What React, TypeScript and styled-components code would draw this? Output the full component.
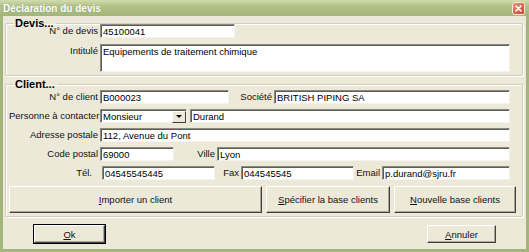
import styled, { createGlobalStyle } from 'styled-components'

const GlobalStyle = createGlobalStyle`
  html, body {
    margin: 0;
    padding: 0;
    background: #ffffff;
  }
  body {
    font-family: 'Liberation Sans', Arial, sans-serif;
    font-size: 9.5px;
    color: #000;
  }
  * {
    box-sizing: border-box;
  }
`

const Window = styled.div`
  width: 529px;
  height: 252px;
  display: flex;
  flex-direction: column;
  background: #ece9d8;
`

const TitleBar = styled.div`
  height: 16px;
  flex: none;
  display: flex;
  align-items: center;
  justify-content: space-between;
  padding: 0 4px 0 3px;
  background: linear-gradient(#d2ddae, #b3c38b 35%, #a2b479);
  color: #fff;
  font-weight: bold;
  font-size: 10px;
  text-shadow: 0 0 1px #7d8f55;
`

const Frame = styled.div`
  flex: 1;
  display: flex;
  flex-direction: column;
  border: 3px solid #a3b57c;
  border-top: none;
  padding-top: 1px;
`

const Group = styled.fieldset<{ $top?: number }>`
  margin: ${p => p.$top ?? 0}px 3px 0 2px;
  padding: 0 12px 3px 3px;
  border: 1px solid #cfcdbd;
  box-shadow: inset 1px 1px 0 #fff, 1px 1px 0 #fff;
  border-radius: 2px;
  min-width: 0;
`

const Legend = styled.legend`
  font-weight: bold;
  font-size: 11px;
  line-height: 12px;
  padding: 0 2px;
  margin-left: 4px;
  color: #000;
`

const Rows = styled.div<{ $shift?: number; $gap: number }>`
  display: flex;
  flex-direction: column;
  gap: ${p => p.$gap}px;
  margin-top: ${p => p.$shift ?? 0}px;
`

const Row = styled.div<{ $top?: boolean }>`
  display: flex;
  align-items: ${p => (p.$top ? 'flex-start' : 'center')};
`

const Label = styled.span<{ $w: number; $pr?: number }>`
  width: ${p => p.$w}px;
  flex: none;
  text-align: right;
  padding-right: ${p => p.$pr ?? 2}px;
  white-space: nowrap;
  line-height: 14px;
  color: #111;
`

const Field = styled.input<{ $w?: number }>`
  height: 14px;
  ${p => (p.$w ? `width: ${p.$w}px; flex: none;` : 'flex: 1; min-width: 0;')}
  padding: 0 2px;
  border: 1px solid;
  border-color: #8a8a80 #f4f3ee #f4f3ee #8a8a80;
  box-shadow: inset 1px 1px 0 #5e5e58;
  background: #fff;
  font: inherit;
  color: #000;
  outline: none;
`

const Area = styled.textarea`
  flex: 1;
  height: 28px;
  padding: 1px 2px;
  border: 1px solid;
  border-color: #8a8a80 #f4f3ee #f4f3ee #8a8a80;
  box-shadow: inset 1px 1px 0 #5e5e58;
  background: #fff;
  font: inherit;
  resize: none;
  outline: none;
`

const Select = styled.div<{ $w: number }>`
  width: ${p => p.$w}px;
  height: 14px;
  flex: none;
  display: flex;
  align-items: center;
  justify-content: space-between;
  margin-right: 3px;
  padding-left: 2px;
  border: 1px solid;
  border-color: #8a8a80 #f4f3ee #f4f3ee #8a8a80;
  box-shadow: inset 1px 1px 0 #5e5e58;
  background: #fff;
`

const DropButton = styled.div`
  width: 14px;
  height: 12px;
  margin-top: 1px;
  display: flex;
  align-items: center;
  justify-content: center;
  background: #ece9d8;
  border: 1px solid;
  border-color: #fff #404040 #404040 #fff;
`

const Arrow = styled.span`
  width: 0;
  height: 0;
  border-left: 3px solid transparent;
  border-right: 3px solid transparent;
  border-top: 3px solid #000;
`

const Button = styled.button<{ $w?: number; $h: number; $default?: boolean }>`
  ${p => (p.$w ? `width: ${p.$w}px; flex: none;` : 'flex: 1;')}
  height: ${p => p.$h}px;
  padding: 0;
  background: #ece9d8;
  border: 1px solid;
  border-color: #fff #404040 #404040 #fff;
  box-shadow: inset -1px -1px 0 #aca899${p => (p.$default ? ', 0 0 0 1px #000' : '')};
  font: inherit;
  color: #111;
`

const ButtonBar = styled.div`
  display: flex;
  gap: 4px;
  margin-top: 1px;
  margin-right: -6px;
`

const Footer = styled.div`
  display: flex;
  justify-content: space-between;
  padding: 8px 30px 0 31px;
`

const Key = styled.span`
  text-decoration: underline;
`

function CloseIcon() {
  return (
    <svg width='13' height='13' viewBox='0 0 13 13'>
      <defs>
        <linearGradient id='cl' x1='0' y1='0' x2='1' y2='1'>
          <stop offset='0' stopColor='#ec9a7f' />
          <stop offset='1' stopColor='#c4402a' />
        </linearGradient>
      </defs>
      <rect x='0.5' y='0.5' width='12' height='12' rx='2' fill='url(#cl)' stroke='#f5e8dc' />
      <path d='M4 4 L9 9 M9 4 L4 9' stroke='#fff' strokeWidth='1.6' strokeLinecap='round' />
    </svg>
  )
}

export default function App() {
  return (
    <>
      <GlobalStyle />
      <Window>
        <TitleBar>
          <span>Déclaration du devis</span>
          <CloseIcon />
        </TitleBar>
        <Frame>
          <Group>
            <Legend>Devis...</Legend>
            <Rows $shift={-5} $gap={6}>
              <Row>
                <Label $w={91}>N° de devis</Label>
                <Field $w={135} defaultValue='45100041' />
              </Row>
              <Row $top>
                <Label $w={91}>Intitulé</Label>
                <Area defaultValue='Equipements de traitement chimique' />
              </Row>
            </Rows>
          </Group>

          <Group $top={2}>
            <Legend>Client...</Legend>
            <Rows $gap={5}>
              <Row>
                <Label $w={91}>N° de client</Label>
                <Field $w={129} defaultValue='B000023' />
                <Label $w={45}>Société</Label>
                <Field defaultValue='BRITISH PIPING SA' />
              </Row>
              <Row>
                <Label $w={91}>Personne à contacter</Label>
                <Select $w={87}>
                  <span>Monsieur</span>
                  <DropButton>
                    <Arrow />
                  </DropButton>
                </Select>
                <Field defaultValue='Durand' />
              </Row>
              <Row>
                <Label $w={91}>Adresse postale</Label>
                <Field defaultValue='112, Avenue du Pont' />
              </Row>
              <Row>
                <Label $w={91}>Code postal</Label>
                <Field $w={74} defaultValue='69000' />
                <Label $w={43}>Ville</Label>
                <Field defaultValue='Lyon' />
              </Row>
              <Row>
                <Label $w={93} $pr={10}>Tél.</Label>
                <Field $w={113} defaultValue='04545545445' />
                <Label $w={26}>Fax</Label>
                <Field $w={113} defaultValue='044545545' />
                <Label $w={28}>Email</Label>
                <Field defaultValue='p.durand@sjru.fr' />
              </Row>
              <ButtonBar>
                <Button $h={27}>
                  <Key>I</Key>mporter un client
                </Button>
                <Button $w={124} $h={27}>
                  <Key>S</Key>pécifier la base clients
                </Button>
                <Button $w={122} $h={27}>
                  <Key>N</Key>ouvelle base clients
                </Button>
              </ButtonBar>
            </Rows>
          </Group>

          <Footer>
            <Button $w={71} $h={18} $default>
              <Key>O</Key>k
            </Button>
            <Button $w={69} $h={18}>
              <Key>A</Key>nnuler
            </Button>
          </Footer>
        </Frame>
      </Window>
    </>
  )
}
